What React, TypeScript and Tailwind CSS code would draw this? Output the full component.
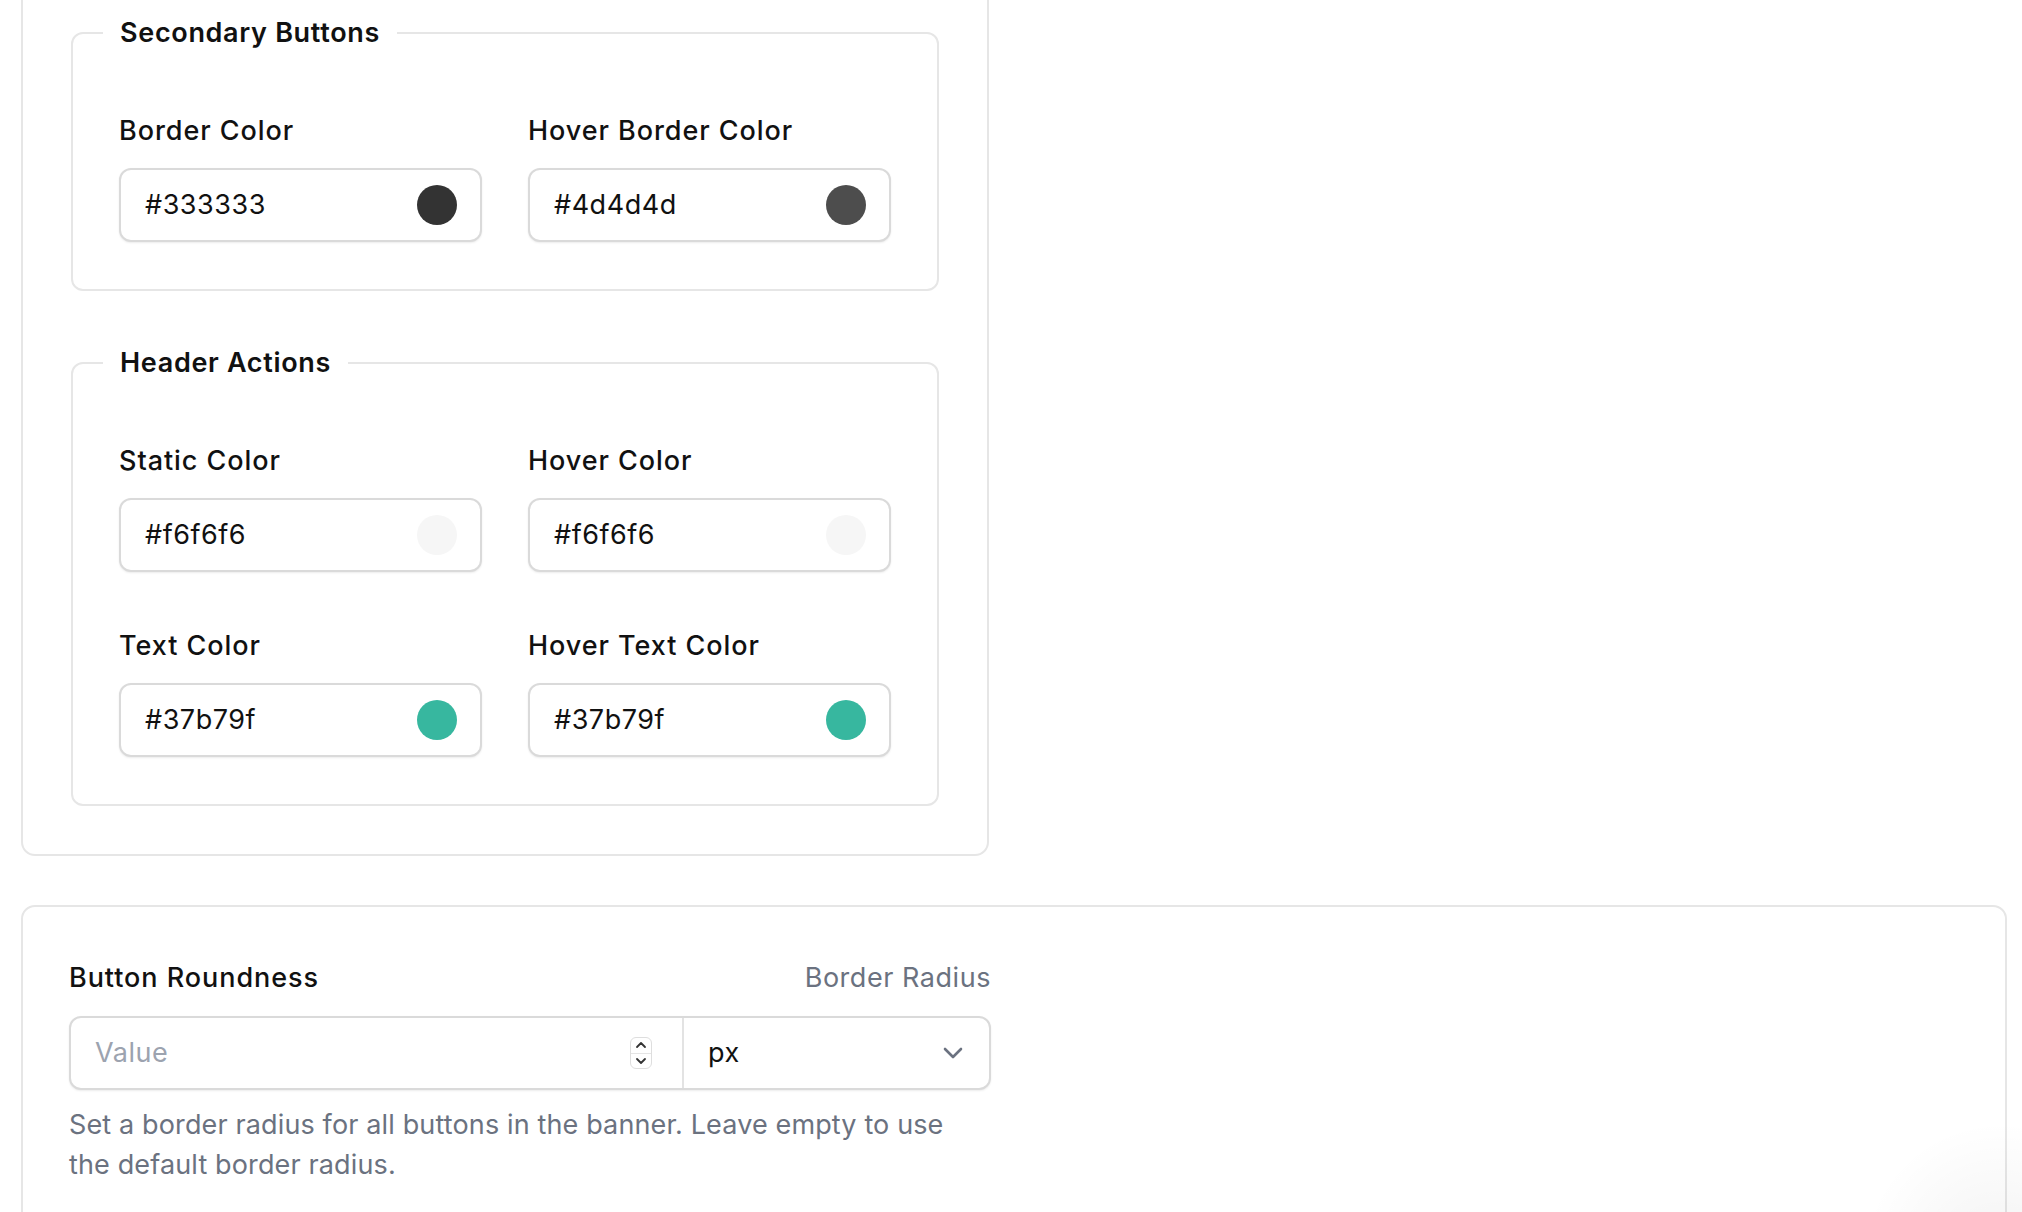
import React from "react";

const font = { fontFamily: "Inter, 'Noto Sans', sans-serif" };

function ColorField({ label, value, color }: { label: string; value: string; color: string }) {
  return (
    <div className="flex flex-col gap-[19px]">
      <div className="text-[27px] leading-[36px] font-medium tracking-[0.035em] text-[#111111]">{label}</div>
      <div className="h-[74px] rounded-[12px] border-2 border-[#dadada] bg-white shadow-[0_1px_2px_rgba(0,0,0,0.08)] flex items-center justify-between pl-[24px] pr-[23px]">
        <span className="text-[27px] leading-[36px] tracking-[0.02em] text-[#111111]">{value}</span>
        <span className="w-[40px] h-[40px] rounded-full" style={{ backgroundColor: color }} />
      </div>
    </div>
  );
}

function Group({ title, children }: { title: string; children: React.ReactNode }) {
  return (
    <fieldset className="border-2 border-[#e6e6e6] rounded-[12px] px-[30px] pt-[60px] pb-[47px]">
      <legend className="px-[17px] text-[27px] leading-[40px] font-semibold tracking-[0.025em] text-[#111111]">{title}</legend>
      <div className="grid grid-cols-2 gap-x-[46px] gap-y-[56px] px-[16px]">{children}</div>
    </fieldset>
  );
}

export default function App() {
  return (
    <div className="relative min-h-screen bg-white overflow-hidden" style={font}>
      <div className="ml-[21px] w-[968px] -mt-[37px] border-2 border-[#e6e6e6] rounded-[14px] px-[48px] pt-[48px] pb-[48px]">
        <div className="flex flex-col gap-[52px]">
          <Group title="Secondary Buttons">
            <ColorField label="Border Color" value="#333333" color="#333333" />
            <ColorField label="Hover Border Color" value="#4d4d4d" color="#4d4d4d" />
          </Group>
          <Group title="Header Actions">
            <ColorField label="Static Color" value="#f6f6f6" color="#f6f6f6" />
            <ColorField label="Hover Color" value="#f6f6f6" color="#f6f6f6" />
            <ColorField label="Text Color" value="#37b79f" color="#37b79f" />
            <ColorField label="Hover Text Color" value="#37b79f" color="#37b79f" />
          </Group>
        </div>
      </div>

      <div className="ml-[21px] mt-[49px] w-[1986px] border-2 border-[#e6e6e6] rounded-[14px] px-[46px] pt-[53px] pb-[60px]">
        <div className="w-[922px]">
          <div className="flex items-baseline justify-between">
            <span className="text-[27px] leading-[36px] font-medium tracking-[0.035em] text-[#111111]">Button Roundness</span>
            <span className="text-[27px] leading-[36px] tracking-[0.02em] text-[#6b7280]">Border Radius</span>
          </div>
          <div className="mt-[20px] h-[74px] flex rounded-[12px] border-2 border-[#dadada] bg-white shadow-[0_1px_2px_rgba(0,0,0,0.08)]">
            <div className="flex-1 flex items-center justify-between pl-[24px] pr-[30px]">
              <span className="text-[27px] leading-[36px] tracking-[0.02em] text-[#9ca3af]">Value</span>
              <div className="w-[22px] h-[32px] rounded-[6px] border border-[#dedede] bg-white flex flex-col">
                <div className="flex-1 flex items-center justify-center border-b border-[#e5e5e5]">
                  <svg width="12" height="8" viewBox="0 0 12 8" fill="none">
                    <polyline points="2,6 6,2 10,6" stroke="#333" strokeWidth="1.8" strokeLinecap="round" strokeLinejoin="round" />
                  </svg>
                </div>
                <div className="flex-1 flex items-center justify-center">
                  <svg width="12" height="8" viewBox="0 0 12 8" fill="none">
                    <polyline points="2,2 6,6 10,2" stroke="#333" strokeWidth="1.8" strokeLinecap="round" strokeLinejoin="round" />
                  </svg>
                </div>
              </div>
            </div>
            <div className="w-[307px] border-l-2 border-[#e3e3e3] flex items-center justify-between pl-[24px] pr-[26px]">
              <span className="text-[27px] leading-[36px] tracking-[0.02em] text-[#111111]">px</span>
              <svg width="20" height="12" viewBox="0 0 20 12" fill="none">
                <polyline points="2,2 10,10 18,2" stroke="#6b7280" strokeWidth="2.6" strokeLinecap="round" strokeLinejoin="round" />
              </svg>
            </div>
          </div>
          <p className="mt-[15px] text-[27px] leading-[40px] tracking-[0.005em] text-[#6b7280]">
            Set a border radius for all buttons in the banner. Leave empty to use the default border radius.
          </p>
        </div>
      </div>

      <div className="pointer-events-none absolute left-[1860px] top-[1120px] w-[280px] h-[280px] rounded-full bg-[radial-gradient(circle_at_center,rgba(0,0,0,0.05),rgba(0,0,0,0)_70%)]" />
    </div>
  );
}
